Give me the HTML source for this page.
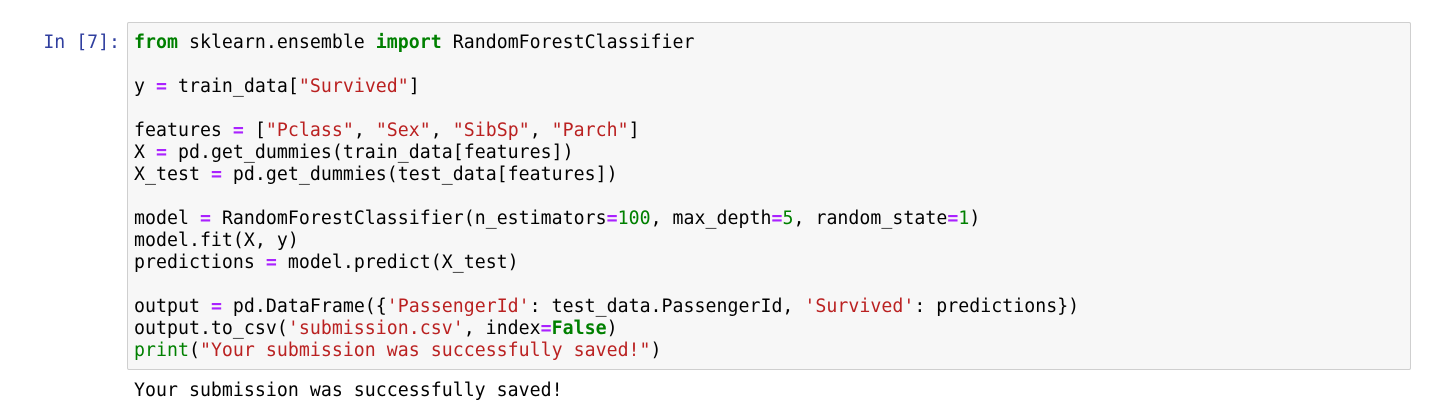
<!DOCTYPE html>
<html><head><style>
body{margin:0;background:#fff;width:1431px;height:413px;overflow:hidden;font-family:"DejaVu Sans Mono","Liberation Mono",monospace;font-size:18.2px;color:#000}
.p{position:absolute;left:0;width:120px;top:32px;text-align:right;color:#303f9f;line-height:22px}
.box{position:absolute;left:127px;top:22px;width:1284px;height:348px;background:#f7f7f7;border:1px solid #cfcfcf;border-radius:2px;box-sizing:border-box}
pre{margin:0;position:absolute;left:134px;top:32px;font:inherit;line-height:22px;white-space:pre;letter-spacing:0.04px}
.k{color:#008000;font-weight:bold}.o{color:#aa22ff;font-weight:bold}.s{color:#ba2121}.n{color:#008000}
.out{position:absolute;left:134px;top:380px;line-height:22px;white-space:pre;letter-spacing:0.04px}
</style></head><body>
<div class="p">In [7]:</div>
<div class="box"></div>
<pre><span class="k">from</span> sklearn.ensemble <span class="k">import</span> RandomForestClassifier

y <span class="o">=</span> train_data[<span class="s">"Survived"</span>]

features <span class="o">=</span> [<span class="s">"Pclass"</span>, <span class="s">"Sex"</span>, <span class="s">"SibSp"</span>, <span class="s">"Parch"</span>]
X <span class="o">=</span> pd.get_dummies(train_data[features])
X_test <span class="o">=</span> pd.get_dummies(test_data[features])

model <span class="o">=</span> RandomForestClassifier(n_estimators<span class="o">=</span><span class="n">100</span>, max_depth<span class="o">=</span><span class="n">5</span>, random_state<span class="o">=</span><span class="n">1</span>)
model.fit(X, y)
predictions <span class="o">=</span> model.predict(X_test)

output <span class="o">=</span> pd.DataFrame({<span class="s">'PassengerId'</span>: test_data.PassengerId, <span class="s">'Survived'</span>: predictions})
output.to_csv(<span class="s">'submission.csv'</span>, index<span class="o">=</span><span class="k">False</span>)
<span class="n">print</span>(<span class="s">"Your submission was successfully saved!"</span>)</pre>
<div class="out">Your submission was successfully saved!</div>
</body></html>
